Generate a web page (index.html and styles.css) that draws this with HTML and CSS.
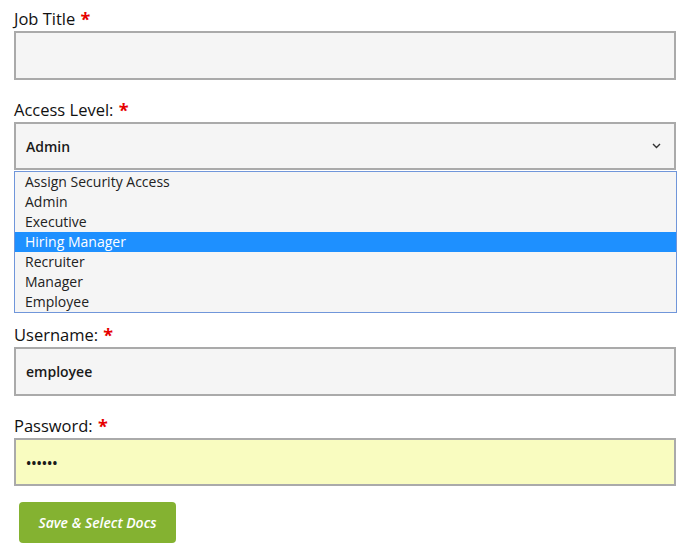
FILE: index.html
```html
<!DOCTYPE html>
<html lang="en">
<head>
<meta charset="utf-8">
<title>User form</title>
<link rel="stylesheet" href="styles.css">
</head>
<body>
<form class="form">
  <div class="field">
    <label class="label">Job Title <span class="req">*</span></label>
    <input class="input" type="text" value="">
  </div>
  <div class="field field-select">
    <label class="label">Access Level: <span class="req">*</span></label>
    <div class="select">
      <span class="select-value">Admin</span>
      <svg class="chevron" width="9" height="6" viewBox="0 0 9 6"><path d="M1 1 L4.5 4.5 L8 1" fill="none" stroke="#333" stroke-width="1.4"/></svg>
    </div>
    <ul class="options">
      <li class="option">Assign Security Access</li>
      <li class="option">Admin</li>
      <li class="option">Executive</li>
      <li class="option option-active">Hiring Manager</li>
      <li class="option">Recruiter</li>
      <li class="option">Manager</li>
      <li class="option">Employee</li>
    </ul>
  </div>
  <div class="field">
    <label class="label">Username: <span class="req">*</span></label>
    <input class="input" type="text" value="employee">
  </div>
  <div class="field">
    <label class="label">Password: <span class="req">*</span></label>
    <input class="input input-pass" type="password" value="secret">
  </div>
  <button class="btn" type="button">Save &amp; Select Docs</button>
</form>
</body>
</html>
```
FILE: styles.css
```css
html, body {
  margin: 0;
  padding: 0;
  background: #ffffff;
}
body {
  font-family: "Open Sans", "Liberation Sans", sans-serif;
  color: #222;
}
.form {
  padding: 8px 0 0 14px;
  width: 662px;
}
.field {
  display: flex;
  flex-direction: column;
  margin-bottom: 19px;
}
.field-select {
  margin-bottom: 11px;
}
.label {
  font-size: 16.5px;
  line-height: 22px;
  height: 22px;
  margin-bottom: 1px;
  color: #111;
}
.req {
  color: #e60000;
  font-weight: 700;
  font-size: 18px;
  line-height: 16px;
  margin-left: 1px;
  position: relative;
  top: 1px;
}
.input {
  box-sizing: border-box;
  height: 49px;
  width: 662px;
  margin: 0;
  border: 2px solid #aaaaaa;
  background: #f5f5f5;
  padding: 0 10px;
  font-family: "Open Sans", "Liberation Sans", sans-serif;
  font-size: 14px;
  font-weight: 600;
  color: #1a1a1a;
  outline: none;
  border-radius: 0;
}
.input-pass {
  height: 48px;
  background: #f9fcc0;
}
.select {
  box-sizing: border-box;
  height: 48px;
  width: 662px;
  border: 2px solid #aaaaaa;
  background: #f5f5f5;
  display: flex;
  align-items: center;
  justify-content: space-between;
  padding: 0 13px 0 10px;
  font-size: 14px;
  font-weight: 600;
  color: #1a1a1a;
}
.chevron {
  display: block;
  margin-top: -1px;
}
.options {
  list-style: none;
  margin: 1px 0 0 0;
  padding: 0;
  width: 663px;
  box-sizing: border-box;
  border: 1px solid #7096da;
  background: #f5f5f5;
}
.option {
  height: 20px;
  line-height: 20px;
  font-size: 14px;
  padding-left: 10px;
  color: #222;
}
.option-active {
  background: #1e90ff;
  color: #ffffff;
}
.btn {
  margin: -3px 0 0 5px;
  width: 157px;
  height: 41px;
  border: none;
  border-radius: 4px;
  background: #84b231;
  color: #ffffff;
  font-family: "Open Sans", "Liberation Sans", sans-serif;
  font-size: 14px;
  font-weight: 600;
  font-style: italic;
  padding: 0;
}
```
